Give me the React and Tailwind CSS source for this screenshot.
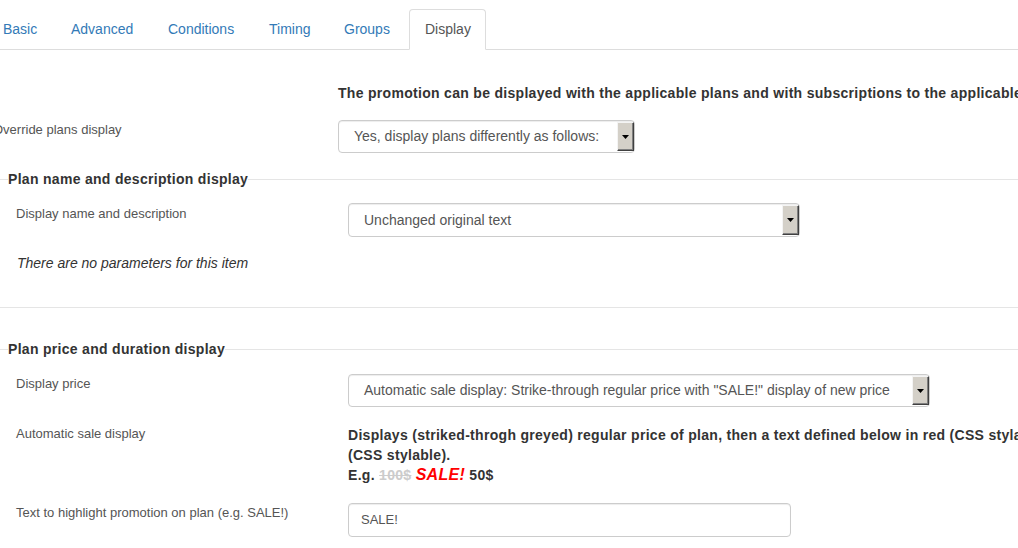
import React from 'react';

const tabs = [
  { label: 'Basic', w: 'w-[66px]' },
  { label: 'Advanced', w: 'w-[95px]' },
  { label: 'Conditions', w: 'w-[99px]' },
  { label: 'Timing', w: 'w-[73px]' },
  { label: 'Groups', w: 'w-[79px]' },
  { label: 'Display', w: 'w-[77px]', active: true },
];

// old windows-style select with the grey arrow button
const Select = ({ text, className }) => (
  <div className={`flex shrink-0 items-stretch rounded-[4px] border border-[#ccc] bg-white shadow-[inset_0_1px_1px_rgba(0,0,0,0.075)] ${className}`}>
    <div className="flex flex-1 items-center whitespace-nowrap pl-[15px] text-[14px] text-[#555]">{text}</div>
    <div className="my-px flex w-[17px] items-center justify-center border border-t-[#f4f4f4] border-l-[#f4f4f4] border-r-[#404040] border-b-[#404040] bg-[#d4d0c8] shadow-[inset_-1px_-1px_0_#808080]">
      <svg width="7" height="4" viewBox="0 0 7 4">
        <path d="M0 0h7L3.5 4z" fill="#000" />
      </svg>
    </div>
  </div>
);

const Legend = ({ children, className }) => (
  <div className={`flex items-center ${className}`}>
    <div className="h-px w-[8px] bg-[#e5e5e5]" />
    <span className="text-[14px] font-bold leading-[20px] tracking-[0.3px] text-[#333]">{children}</span>
    <div className="h-px flex-1 bg-[#e5e5e5]" />
  </div>
);

const Label = ({ children }) => (
  <div className="w-[348px] shrink-0 pl-[16px] pt-[1px] text-[13px] leading-[18px] text-[#555]">{children}</div>
);

export default function App() {
  return (
    <div className="h-[548px] w-[1018px] overflow-hidden bg-white font-['Liberation_Sans',Arial,sans-serif]">
      {/* Tabs */}
      <ul className="flex h-[50px] items-end border-b border-[#ddd] pl-0">
        <div className="flex -mb-px ml-[-13px] gap-[2px]">
          {tabs.map((t) => (
            <li
              key={t.label}
              className={`${t.w} h-[41px] list-none rounded-t-[4px] border pl-[15px] text-[14px] leading-[39px] ${
                t.active
                  ? 'border-[#ddd] border-b-transparent bg-white text-[#555]'
                  : 'border-transparent text-[#337ab7]'
              }`}
            >
              {t.label}
            </li>
          ))}
        </div>
      </ul>

      <div className="pt-[33px]">
        <div className="whitespace-nowrap pl-[338px] text-[14px] font-bold leading-[20px] tracking-[0.3px] text-[#333]">
          The promotion can be displayed with the applicable plans and with subscriptions to the applicable plans as follows:
        </div>

        <div className="mt-[17px] flex">
          <div className="ml-[-7px] w-[345px] shrink-0 pt-px text-[13px] leading-[18px] text-[#555]">Override plans display</div>
          <Select className="h-[33px] w-[297px]" text="Yes, display plans differently as follows:" />
        </div>

        <Legend className="mt-[16px]">Plan name and description display</Legend>

        <div className="mt-[14px] flex">
          <div className="pt-px">
            <Label>Display name and description</Label>
          </div>
          <Select className="h-[34px] w-[452px]" text="Unchanged original text" />
        </div>

        <div className="mt-[16px] pl-[17px] text-[14px] italic leading-[20px] text-[#333]">
          There are no parameters for this item
        </div>

        <div className="mt-[34px] h-px bg-[#e5e5e5]" />

        <Legend className="mt-[31px]">Plan price and duration display</Legend>

        <div className="mt-[15px] flex">
          <Label>Display price</Label>
          <Select
            className="h-[33px] w-[582px]"
            text={'Automatic sale display: Strike-through regular price with "SALE!" display of new price'}
          />
        </div>

        <div className="mt-[17px] flex">
          <Label>Automatic sale display</Label>
          <div className="whitespace-nowrap pt-px text-[14px] font-bold leading-[20px] tracking-[0.3px] text-[#333]">
            <div>Displays (striked-throgh greyed) regular price of plan, then a text defined below in red (CSS stylable), then the new price</div>
            <div>(CSS stylable).</div>
            <div>
              E.g. <span className="text-[#ccc] line-through">100$</span>{' '}
              <span className="text-[16px] italic text-[#f00]">SALE!</span> 50$
            </div>
          </div>
        </div>

        <div className="mt-[18px] flex">
          <Label>Text to highlight promotion on plan (e.g. SALE!)</Label>
          <div className="flex h-[34px] w-[443px] items-center rounded-[4px] border border-[#ccc] bg-white pl-[12px] text-[13px] text-[#555] shadow-[inset_0_1px_1px_rgba(0,0,0,0.075)]">
            SALE!
          </div>
        </div>
      </div>
    </div>
  );
}
